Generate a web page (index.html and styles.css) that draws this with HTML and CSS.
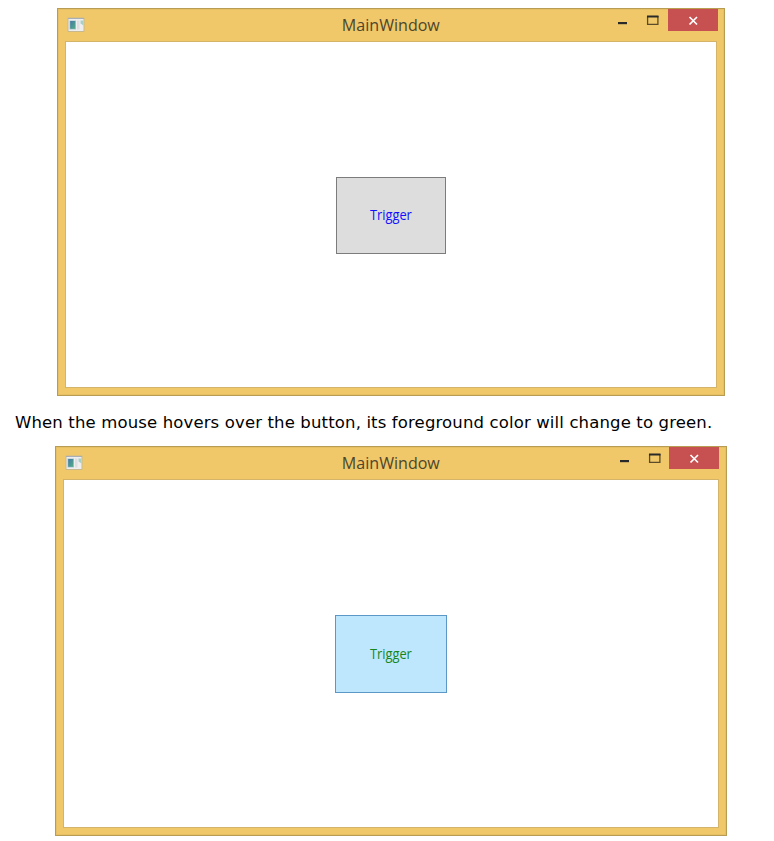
FILE: index.html
```html
<!DOCTYPE html>
<html lang="en">
<head>
<meta charset="utf-8">
<title>Property Trigger</title>
<link rel="stylesheet" href="styles.css">
</head>
<body>
<svg class="defs" width="0" height="0" aria-hidden="true">
  <defs>
    <linearGradient id="pane" x1="0" y1="0" x2="1" y2="1"><stop offset="0" stop-color="#4379a5"/><stop offset="1" stop-color="#50ad87"/></linearGradient>
    <symbol id="app" viewBox="0 0 18 16">
      <rect x=".5" y=".5" width="17" height="14.5" rx="1" fill="#c6b98f"/>
      <rect x="1.5" y="1.5" width="15" height="12.5" fill="#eeeeef"/>
      <path d="M1 1.5h16" stroke="#a9afb7"/>
      <rect x="2.5" y="3.5" width="6.5" height="9" fill="#a7c1cf"/>
      <rect x="3.2" y="4" width="5" height="7.8" fill="url(#pane)"/>
      <rect x="10" y="3.5" width="2.5" height="9" fill="#dedee2"/>
      <path d="M13.5 3.5h3v5l-3-2z" fill="#a8d0c8"/>
    </symbol>
    <symbol id="controls" viewBox="0 0 50 22">
      <rect x="0" y="13" width="9" height="2.2" fill="#292929"/>
      <path d="M29.6 7v8.4h10.3V7" fill="none" stroke="#5a4c2b" stroke-width="1.3"/>
      <path d="M29 7.5h11.5" stroke="#292929" stroke-width="2"/>
    </symbol>
    <symbol id="close" viewBox="0 0 50 22"><path d="M21.5 8l7.5 7.5M29 8l-7.5 7.5" stroke="#fff" stroke-width="1.7"/></symbol>
  </defs>
</svg>
<main class="page">
  <section class="window normal">
    <header class="titlebar">
      <svg class="app-icon"><use href="#app"/></svg>
      <h1 class="title"><span>MainWindow</span></h1>
      <div class="window-controls"><svg class="min-max"><use href="#controls"/></svg><svg class="close"><use href="#close"/></svg></div>
    </header>
    <div class="client"><button class="trigger"><span>Trigger</span></button></div>
  </section>
  <p class="caption">When the mouse hovers over the button, its foreground color will change to green.</p>
  <section class="window hovered">
    <header class="titlebar">
      <svg class="app-icon"><use href="#app"/></svg>
      <h1 class="title"><span>MainWindow</span></h1>
      <div class="window-controls"><svg class="min-max"><use href="#controls"/></svg><svg class="close"><use href="#close"/></svg></div>
    </header>
    <div class="client"><button class="trigger"><span>Trigger</span></button></div>
  </section>
</main>
</body>
</html>
```
FILE: styles.css
```css
* { box-sizing: border-box; }
html { overflow: hidden; }
body { margin: 0; background: #fff; }
.defs { display: block; }
.page { display: flex; flex-direction: column; align-items: center; width: 782px; height: 841px; padding-top: 8px; overflow: hidden; }
.window { display: flex; flex-direction: column; flex: none; padding: 0 7px 7px; background: #f0c869; border: 1px solid #b89c52; box-shadow: inset 0 0 0 1px #e7bf64; }
.normal { width: 668px; height: 388px; }
.hovered { width: 672px; height: 390px; }
.titlebar { display: grid; grid-template-columns: 112px 1fr 112px; height: 32px; flex: none; }
.app-icon { width: 18px; height: 16px; margin: 8px 0 0 2px; }
.title { display: flex; justify-content: center; margin: 0; font: 400 17px/31px "Open Sans", sans-serif; color: #4e452c; white-space: nowrap; }
.title span { display: inline-block; transform: scaleX(.945); }
.window-controls { display: flex; width: 99px; margin-left: 13px; }
.min-max { width: 50px; height: 22px; flex: none; }
.close { width: 50px; height: 22px; flex: none; background: #c75050; margin-left: -1px; }
.normal .close { margin-left: -.5px; }
.client { display: flex; flex: 1; align-items: center; justify-content: center; background: #fff; border: 1px solid #d3b468; }
.trigger { padding: 0; border: 1px solid #7c7c7c; background: #ddd; color: #1010ff; font: 14px/18px "Open Sans", sans-serif; }
.normal .trigger { width: 110px; height: 77px; margin-top: 1px; }
.trigger span { display: inline-block; transform: scaleX(.915); }
.hovered .trigger { width: 112px; height: 78px; border-color: #5b98c7; background: #bee6fd; color: #15871d; }
.caption { width: 704px; height: 50px; margin: 0 0 0 15px; padding-top: 16px; font: 16.5px/21px "DejaVu Sans", sans-serif; letter-spacing: .14px; color: #000; white-space: nowrap; align-self: flex-start; }
```
